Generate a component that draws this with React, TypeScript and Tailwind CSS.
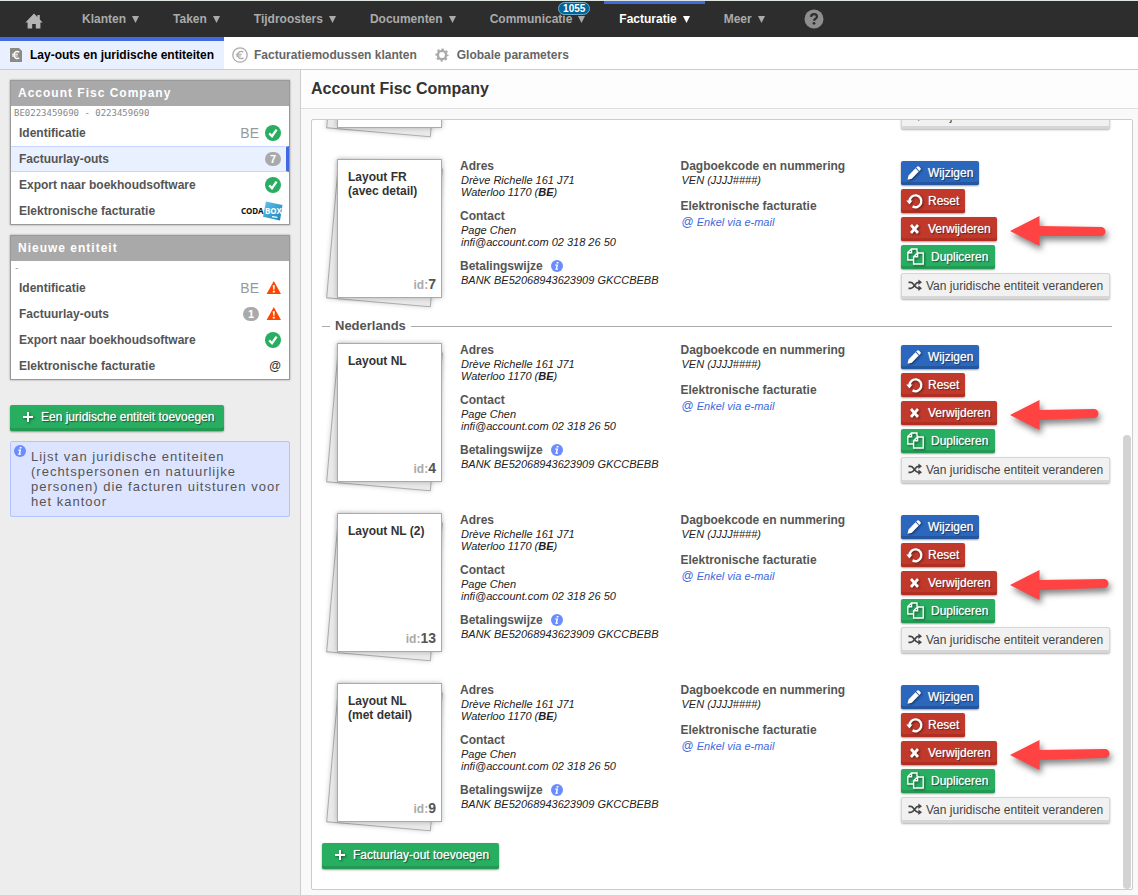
import type { ReactNode } from "react";
import { clsx } from "clsx";

type Tone = "blue" | "red" | "green" | "grey";

interface Arrow {
    length: number;
    rise: number;
}

interface Layout {
    id: number;
    name: string[];
    arrow?: Arrow;
}

const NAV = [
    { label: "Klanten" },
    { label: "Taken" },
    { label: "Tijdroosters" },
    { label: "Documenten" },
    { label: "Communicatie", badge: "1055" },
    { label: "Facturatie", active: true },
    { label: "Meer" },
];

const FRENCH: Layout[] = [
    { id: 6, name: ["Layout FR"] },
    { id: 7, name: ["Layout FR", "(avec detail)"], arrow: { length: 96, rise: 0 } },
];

const DUTCH: Layout[] = [
    { id: 4, name: ["Layout NL"], arrow: { length: 89, rise: 2 } },
    { id: 13, name: ["Layout NL (2)"], arrow: { length: 99, rise: 2 } },
    { id: 9, name: ["Layout NL", "(met detail)"], arrow: { length: 100, rise: 2 } },
];

const TONES: Record<Tone, string> = {
    blue: "bg-[#2b67bd] text-white shadow-[inset_0_-3px_0_#2456a0,0_1px_2px_rgba(0,0,0,0.4)] [text-shadow:0_0_1px_rgba(255,255,255,0.7),1px_1px_1px_rgba(0,0,0,0.6)]",
    red: "bg-[#c0392b] text-white shadow-[inset_0_-3px_0_#b02f22,0_1px_2px_rgba(0,0,0,0.4)] [text-shadow:0_0_1px_rgba(255,255,255,0.7),1px_1px_1px_rgba(0,0,0,0.6)]",
    green: "bg-[#27ae60] text-white shadow-[inset_0_-3px_0_#229a54,0_1px_2px_rgba(0,0,0,0.4)] [text-shadow:0_0_1px_rgba(255,255,255,0.7),1px_1px_1px_rgba(0,0,0,0.6)]",
    grey: "border border-[#d6d6d6] bg-[#f1f1f1] text-[#444] shadow-[inset_0_-2px_0_#d6d6d6,0_1px_2px_rgba(0,0,0,0.3)]",
};

/* ---------- icons ---------- */

function CheckIcon() {
    return (
        <svg viewBox="0 0 16 16" className="h-4 w-4">
            <circle cx="8" cy="8" r="8" fill="#27ae60" />
            <path d="M4.2 8.4 7 11.2 11.6 4.6" fill="none" stroke="#fff" strokeWidth="2.3" />
        </svg>
    );
}

function WarningIcon() {
    return (
        <svg viewBox="0 0 16 16" className="h-4 w-4">
            <path d="M8.8 1 16 14H1.6Z" fill="#ff4500" />
            <path d="M7.7 5.2h2.2l-.5 4.600H8.200zM7.800 10.800h2v1.800h-2z" fill="#fff" />
        </svg>
    );
}

function InfoIcon() {
    return (
        <svg viewBox="0 0 12 12" className="h-3 w-3">
            <circle cx="6" cy="6" r="6" fill="#6b8cff" />
            <path d="M5.8 2h1.8l-.3 1.5H5.5zM4.2 4.5h2.9L6.2 8.7h.9l-.2 1H4.1l.2-1h.5l.6-3.2H4z" fill="#fff" />
        </svg>
    );
}

function CodaboxLogo() {
    return (
        <svg viewBox="0 0 42 20" className="-mr-0.5 h-5 w-[42px]" role="img" aria-label="Codabox">
            <defs>
                <linearGradient id="coda" x1="0" y1="0" x2="1" y2="1">
                    <stop offset="0" stopColor="#63c6ec" />
                    <stop offset="1" stopColor="#1583b8" />
                </linearGradient>
            </defs>
            <path d="M25 .5 41.500 4 39 19.600 22 15.800Z" fill="url(#coda)" />
            <text x="0" y="13" fontSize="8" fontWeight="bold" fontFamily="Noto Sans, sans-serif" fill="#111">CODA</text>
            <text x="24" y="13" fontSize="8" fontWeight="bold" fontFamily="Noto Sans, sans-serif" fill="#fff">BOX</text>
            <path d="M31 15.600l5.400.8" stroke="#fff" strokeWidth="1.400" />
        </svg>
    );
}

function PencilIcon() {
    return (
        <svg viewBox="0 0 14 14" className="h-3.5 w-3.5 fill-current drop-shadow-[1px_1px_1px_rgba(0,0,0,0.5)]">
            <path d="M9.200 1.600 10.300.6q1-.8 1.900.1l1.200 1.200q.9.9.1 1.800l-1.200 1.200zM8.500 2.300l3.300 3.300-7 7.200L.5 13.800l1-4.300z" />
        </svg>
    );
}

function ResetIcon() {
    return (
        <svg viewBox="0 0 14 14" className="h-3.5 w-3.5 overflow-visible drop-shadow-[1px_1px_1px_rgba(0,0,0,0.5)]">
            <path d="M2.600 7.500A5.900 5.900 0 1 1 5.600 12.400" fill="none" stroke="#fff" strokeWidth="2.400" />
            <path d="M-.8 6.600h6.400L2.400 10.600Z" fill="#fff" />
        </svg>
    );
}

function CrossIcon() {
    return (
        <svg viewBox="0 0 14 14" className="h-3.5 w-3.5 drop-shadow-[1px_1px_1px_rgba(0,0,0,0.5)]">
            <path d="M4 3 11 11M11 3 4 11" stroke="#fff" strokeWidth="2.700" />
        </svg>
    );
}

function CopyIcon() {
    return (
        <svg viewBox="0 0 17 17" className="h-[17px] w-[17px] drop-shadow-[1px_1px_1px_rgba(0,0,0,0.5)]" fill="none" stroke="#fff" strokeWidth="1.4">
            <path d="M6 12H.8V4.6L4.4 1H10v3.6M.8 4.8h3.8V1" />
            <path d="M10.6 5h5.600v11H6.600V8.800L10.600 5v3.800H6.800" />
        </svg>
    );
}

function ShuffleIcon() {
    return (
        <svg viewBox="0 0 14 14" className="h-3.5 w-3.5" fill="none" stroke="#444" strokeWidth="1.7">
            <path d="M.5 3.300h2.300c3 0 4 6 7.400 6H11M.5 9.300h2.300c3.400 0 4.400-6 7.400-6H11" />
            <path d="M10.400.6 14 3.300l-3.600 2.700zM10.400 6.600 14 9.300l-3.600 2.700z" fill="#444" stroke="none" />
        </svg>
    );
}

function PlusIcon() {
    return (
        <svg viewBox="0 0 14 14" className="h-3.5 w-3.5 drop-shadow-[1px_1px_1px_rgba(0,0,0,0.5)]">
            <path d="M7 2v10M2 7h10" stroke="#fff" strokeWidth="2" />
        </svg>
    );
}

function EuroFileIcon() {
    return (
        <svg viewBox="0 0 14 16" className="h-4 w-3.5">
            <path d="M1 1h9l3 3v11H1z" fill="#8b8b86" />
            <path d="M10.300 5.200C7.500 3.600 5 5.200 5 8s2.500 4.400 5.300 2.800" fill="none" stroke="#fff" strokeWidth="1.400" />
            <path d="M3 7.200h6M3 9h5.500" stroke="#fff" strokeWidth="1" />
        </svg>
    );
}

function EuroCircleIcon() {
    return (
        <svg viewBox="0 0 16 16" className="h-4 w-4" fill="none" stroke="#aaa">
            <circle cx="8" cy="8" r="7.200" strokeWidth="1.300" />
            <path d="M11.400 5.200C8.600 3.400 5.600 5 5.600 8s3 4.600 5.800 2.800" strokeWidth="1.400" />
            <path d="M3.800 7.200h6M3.800 9h5.400" strokeWidth="1" />
        </svg>
    );
}

function GearIcon() {
    return (
        <svg viewBox="0 0 14 14" className="h-3.5 w-3.5" fill="none" stroke="#aaa">
            <circle cx="7" cy="7" r="4.100" strokeWidth="2.400" />
            <circle cx="7" cy="7" r="5.700" strokeWidth="1.800" strokeDasharray="2.400 2.077" strokeDashoffset="1.200" />
        </svg>
    );
}

/* ---------- header ---------- */

function TopNav() {
    return (
        <nav className="flex h-[37px] shrink-0 items-stretch gap-1 border-t border-[#dfe5df] bg-[#2d2d2d]">
            <a href="#home" aria-label="Home" className="flex w-[63px] items-center pt-1 pl-[25px]">
                <svg viewBox="0 0 18 16" className="h-4 w-[18px]" fill="#b5b5b5">
                    <path d="M9 .5 12.4 4V2h2.4v4.4L17.6 9.4h-2.2V15.500h-4.600V11H7.200v4.500H2.600V9.400H.400z" />
                </svg>
            </a>
            {NAV.map((item) => (
                <button
                    key={item.label}
                    className={clsx(
                        "relative flex items-center gap-1.5 border-t-[3px] px-[15px] pb-1 text-[12px] font-bold",
                        item.active ? "border-[#4169e1] text-white" : "border-transparent text-[#aaa]"
                    )}
                >
                    {item.label}
                    <svg viewBox="0 0 7 8" className="h-2 w-[7px] fill-current">
                        <path d="M0 1h7L3.500 8z" />
                    </svg>
                    {item.badge && (
                        <span className="absolute -top-0.5 right-2.5 rounded-full border border-[#6fa9c4] bg-[#00659c] px-1 text-[10px] leading-[11px] text-white">
                            {item.badge}
                        </span>
                    )}
                </button>
            ))}
            <button aria-label="Help" className="flex items-center pl-5">
                <svg viewBox="0 0 20 20" className="h-5 w-5">
                    <circle cx="10" cy="10" r="9.500" fill="#8e8e8e" />
                    <path d="M7 7.800q.2-2.600 3-2.600t3 2.400q0 1.300-1.500 2.200-1.400.8-1.400 2" fill="none" stroke="#2d2d2d" strokeWidth="2.200" />
                    <circle cx="10" cy="14.300" r="1.400" fill="#2d2d2d" />
                </svg>
            </button>
        </nav>
    );
}

function SubNav() {
    return (
        <nav className="flex h-[33px] shrink-0 border-b border-[#ccc] bg-white text-[12px] font-bold text-[#666]">
            <a href="#layouts" className="flex items-center gap-[7px] border-t-4 border-[#4169e1] bg-[#e9f0ff] pr-2.5 pl-[9px] text-black">
                <EuroFileIcon />
                Lay-outs en juridische entiteiten
            </a>
            <a href="#modes" className="flex items-center gap-1.5 pt-[3px] pl-2">
                <EuroCircleIcon />
                Facturatiemodussen klanten
            </a>
            <a href="#params" className="flex items-center gap-2 pt-[3px] pl-[18px]">
                <GearIcon />
                Globale parameters
            </a>
        </nav>
    );
}

/* ---------- sidebar ---------- */

function Pill({ children }: { children: ReactNode }) {
    return (
        <span className="w-4 rounded-full bg-[#aaa] text-center text-[11px] leading-[14px] font-bold text-white">
            {children}
        </span>
    );
}

function Country() {
    return <span className="text-[14px] font-normal text-[#999]">BE</span>;
}

function EntityCard({ title, vat, children }: { title: string; vat: string; children: ReactNode }) {
    return (
        <section className="border border-[#999] bg-white shadow-[0_0_2px_#999]">
            <h2 className="h-[25px] bg-[#a9a9a9] pl-[7px] text-[12px] leading-6 font-bold tracking-[1px] text-white">{title}</h2>
            <p className="h-3.5 pl-[3px] font-['DejaVu_Sans_Mono',monospace] text-[9px] leading-[14px] text-[#888]">{vat}</p>
            <ul>{children}</ul>
        </section>
    );
}

function EntityRow({ label, active, children }: { label: string; active?: boolean; children: ReactNode }) {
    return (
        <li>
            <a
                href="#entity"
                className={clsx(
                    "flex h-[26px] items-center gap-1.5 pl-2 text-[12px] font-bold text-[#555]",
                    active ? "border-y border-r-[3px] border-y-[#c6d5ff] border-r-[#4169e1] bg-[#e9f0ff] pr-[5px]" : "pr-2"
                )}
            >
                <span className="flex-1">{label}</span>
                {children}
            </a>
        </li>
    );
}

function AddButton({ children }: { children: ReactNode }) {
    return (
        <button className={clsx("flex h-[26px] items-center gap-1.5 rounded-xs pr-2.5 pb-0.5 pl-[11px] text-[12px]", TONES.green)}>
            <PlusIcon />
            {children}
        </button>
    );
}

function Sidebar() {
    return (
        <aside className="w-[301px] shrink-0 border-r border-[#ccc] bg-[#ededed] px-2.5 pt-2.5">
            <div className="flex flex-col gap-2.5">
                <EntityCard title="Account Fisc Company" vat="BE0223459690 - 0223459690">
                    <EntityRow label="Identificatie"><Country /><CheckIcon /></EntityRow>
                    <EntityRow label="Factuurlay-outs" active><Pill>7</Pill></EntityRow>
                    <EntityRow label="Export naar boekhoudsoftware"><CheckIcon /></EntityRow>
                    <EntityRow label="Elektronische facturatie"><CodaboxLogo /></EntityRow>
                </EntityCard>
                <EntityCard title="Nieuwe entiteit" vat="-">
                    <EntityRow label="Identificatie"><Country /><WarningIcon /></EntityRow>
                    <EntityRow label="Factuurlay-outs"><Pill>1</Pill><WarningIcon /></EntityRow>
                    <EntityRow label="Export naar boekhoudsoftware"><CheckIcon /></EntityRow>
                    <EntityRow label="Elektronische facturatie"><span className="text-[#333]">@</span></EntityRow>
                </EntityCard>
            </div>
            <div className="mt-[25px] mb-2.5">
                <AddButton>Een juridische entiteit toevoegen</AddButton>
            </div>
            <div className="relative rounded-xs border border-[#b3c3ff] bg-[#dde4ff] py-[7px] pr-1 pl-5 text-[13px] leading-[15px] tracking-[1px] text-[#555]">
                <span className="absolute top-[3px] left-[3px]"><InfoIcon /></span>
                Lijst van juridische entiteiten (rechtspersonen en natuurlijke personen) die facturen uitsturen voor het kantoor
            </div>
        </aside>
    );
}

/* ---------- layouts ---------- */

function PagePreview({ layout }: { layout: Layout }) {
    return (
        <div className="relative mt-px ml-[15px] h-[139px] w-[105px]">
            <div className="absolute top-[5px] right-[5px] h-full w-full rotate-5 border border-[#aaa] bg-[#e9e9e9] shadow-[0_0_5px_rgba(0,0,0,0.2)]" />
            <div className="relative flex h-full flex-col justify-between border border-[#aaa] bg-white pt-2.5 pr-[5px] pb-0.5 pl-2.5 shadow-[0_0_5px_rgba(0,0,0,0.25)]">
                <p className="text-[12px] leading-[14px] font-bold text-[#333]">
                    {layout.name.map((line) => (
                        <span key={line} className="block">{line}</span>
                    ))}
                </p>
                <p className="text-right text-[12px] leading-5 font-bold text-[#aaa]">
                    id:<span className="text-[14px] text-[#555]">{layout.id}</span>
                </p>
            </div>
        </div>
    );
}

function Detail({ label, info, children }: { label: string; info?: boolean; children: ReactNode }) {
    return (
        <div>
            <h4 className="flex items-center gap-2 text-[12px] leading-4 font-bold text-[#555]">
                {label}
                {info && <InfoIcon />}
            </h4>
            <div className="pl-px text-[11px] leading-3 text-[#222] italic">{children}</div>
        </div>
    );
}

function ActionButton({ tone, icon, wide, children }: { tone: Tone; icon: ReactNode; wide?: boolean; children: ReactNode }) {
    return (
        <button
            className={clsx(
                "flex items-center rounded-xs px-1.5 pb-px text-[12px] whitespace-nowrap",
                tone === "grey" ? "h-[26px] gap-1" : "h-6",
                tone !== "grey" && "gap-[7px]",
                wide && "pr-[7px]",
                TONES[tone]
            )}
        >
            {icon}
            {children}
        </button>
    );
}

// red pointer that sits over the page, its tip next to the delete button
function PointerArrow({ length, rise }: Arrow) {
    const end = length - 5;
    return (
        <svg
            width={length + 10}
            height="44"
            className="absolute -top-2.5 left-full ml-[13px] overflow-visible drop-shadow-[2px_4px_3px_rgba(0,0,0,0.5)]"
        >
            <path d={`M0 24 29.500 9V19L${end} ${20 - rise}A4.500 4.500 0 0 1 ${end} ${29 - rise}L29.500 29V39Z`} fill="#ff4343" />
        </svg>
    );
}

function LayoutRow({ layout }: { layout: Layout }) {
    return (
        <article className="grid min-h-[142px] grid-cols-[138px_1fr_1fr_211px]">
            <PagePreview layout={layout} />
            <div className="flex flex-col gap-2.5">
                <Detail label="Adres">
                    <p>Drève Richelle 161 J71</p>
                    <p>Waterloo 1170 (<b>BE</b>)</p>
                </Detail>
                <Detail label="Contact">
                    <p>Page Chen</p>
                    <p>infi@account.com 02 318 26 50</p>
                </Detail>
                <Detail label="Betalingswijze" info>
                    <p>BANK BE52068943623909 GKCCBEBB</p>
                </Detail>
            </div>
            <div className="flex flex-col gap-3">
                <Detail label="Dagboekcode en nummering">
                    <p>VEN (JJJJ####)</p>
                </Detail>
                <Detail label="Elektronische facturatie">
                    <a href="#mail" className="flex items-center gap-[3px] text-[#4169e1]">
                        <span className="text-[12px] leading-4 not-italic">@</span>
                        Enkel via e-mail
                    </a>
                </Detail>
            </div>
            <div className="flex flex-col items-start gap-1 pt-[3px]">
                <ActionButton tone="blue" icon={<PencilIcon />}>Wijzigen</ActionButton>
                <ActionButton tone="red" icon={<ResetIcon />}>Reset</ActionButton>
                <div className="relative">
                    <ActionButton tone="red" icon={<CrossIcon />}>Verwijderen</ActionButton>
                    {layout.arrow && <PointerArrow {...layout.arrow} />}
                </div>
                <ActionButton tone="green" icon={<CopyIcon />} wide>Dupliceren</ActionButton>
                <ActionButton tone="grey" icon={<ShuffleIcon />}>Van juridische entiteit veranderen</ActionButton>
            </div>
        </article>
    );
}

export default function App() {
    return (
        <div className="flex h-screen flex-col overflow-hidden font-['Liberation_Sans',Arial,sans-serif]">
            <TopNav />
            <SubNav />
            <div className="flex min-h-0 flex-1">
                <Sidebar />
                <main className="flex min-w-0 flex-1 flex-col bg-[#f9f9f9]">
                    <h1 className="h-[39px] shrink-0 border-b border-[#ddd] bg-[#fdfdfd] pl-2.5 text-[16px] leading-[38px] font-bold text-[#333]">
                        Account Fisc Company
                    </h1>
                    <div className="relative mx-[5px] mt-2.5 mb-[5px] ml-2.5 flex min-h-0 flex-1 flex-col justify-end overflow-hidden rounded-xs border border-[#ccc] bg-white pr-5 pb-5 pl-2.5">
                        <div className="flex flex-col gap-7">
                            {FRENCH.map((layout) => <LayoutRow key={layout.id} layout={layout} />)}
                        </div>
                        <h3 className="mt-[18px] mb-2 flex items-center gap-[5px] text-[13px] leading-4 font-bold text-[#555]">
                            <span className="h-px w-2 bg-[#aaa]" />
                            Nederlands
                            <span className="h-px flex-1 bg-[#aaa]" />
                        </h3>
                        <div className="flex flex-col gap-7">
                            {DUTCH.map((layout) => <LayoutRow key={layout.id} layout={layout} />)}
                        </div>
                        <div className="mt-[19px]">
                            <AddButton>Factuurlay-out toevoegen</AddButton>
                        </div>
                        {/* scrollbar thumb */}
                        <div className="absolute right-px bottom-0 h-[59%] w-2 rounded-full bg-[#d3d3d3]" />
                    </div>
                </main>
            </div>
        </div>
    );
}
